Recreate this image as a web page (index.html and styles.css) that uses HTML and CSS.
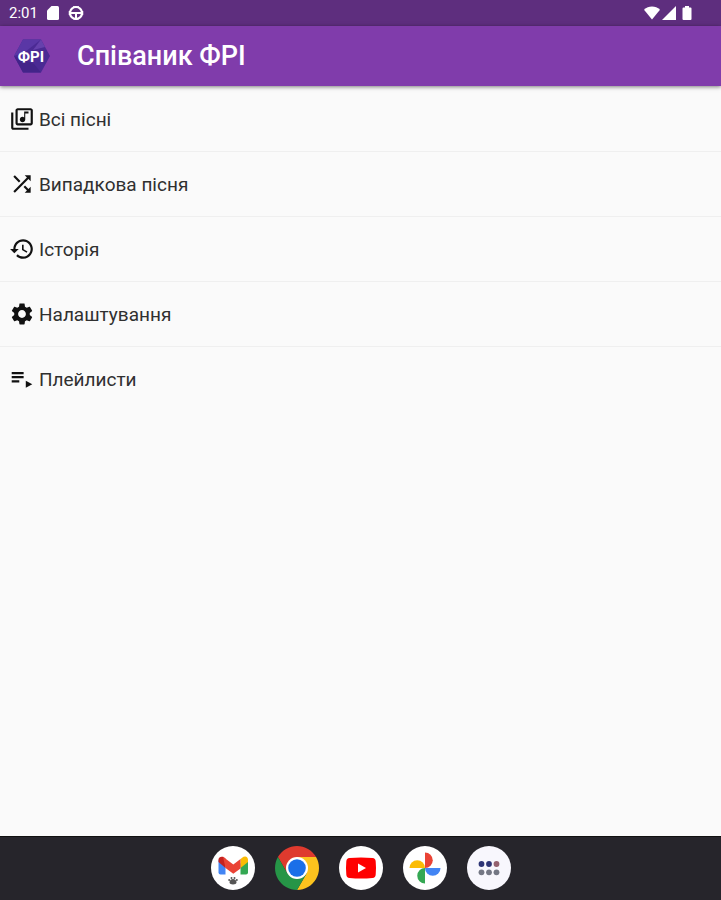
FILE: index.html
```html
<!doctype html>
<html lang="uk">
   <head>
      <meta charset="UTF-8" />
      <meta name="viewport" content="width=device-width, initial-scale=1.0" />
      <title>Співаник ФРІ</title>
      <link rel="stylesheet" href="styles.css">
   </head>
   <body>
      <div class="status">
         <span class="time">2:01</span>
         <svg class="sd" width="12" height="14" viewBox="0 0 12 14"><path fill="#fff" d="M4.500 0H10.500Q12 0 12 1.500V12.500Q12 14 10.500 14H1.500Q0 14 0 12.500V4.500z"/></svg>
         <svg class="wheel" width="16" height="16" viewBox="0 0 16 16" fill="none" stroke="#fff">
            <circle cx="8" cy="8" r="6" stroke-width="2.200"/>
            <path d="M2 8h12M8 9v4" stroke-width="2"/>
            <path d="M5 2h6M1.500 6v4M14.500 6v4M5.500 14h5" stroke-width="1.500"/>
         </svg>
         <div class="signals">
            <svg width="16" height="14" viewBox="0 0 16 14"><path fill="#fff" d="M8 13.500L0 3.800Q3.500 .5 8 .5t8 3.300z"/></svg>
            <svg width="14" height="14" viewBox="0 0 14 14"><path fill="#fff" d="M14 0v14H0z"/></svg>
            <svg class="battery" width="10" height="14" viewBox="0 0 10 14"><path fill="#fff" d="M3 0h4v1.500h1.500q1 0 1 1V13q0 1-1 1h-7q-1 0-1-1V2.500q0-1 1-1H3z"/></svg>
         </div>
      </div>

      <header class="appbar">
         <svg class="logo" width="36" height="36" viewBox="0 0 36 36">
            <path fill="#4b2a94" d="M9 1.500h18L36 18l-9 16.500H9L0 18z"/>
            <path fill="#5a37a6" d="M9 1.500h18L11 14 0 18z"/>
            <path fill="#6641ad" d="M27 1.500L19 12l12-3z"/>
            <path fill="#432489" d="M0 18l20 8 7 8.500H9z"/>
            <text class="logo-text" x="17" y="24" text-anchor="middle">ФРІ</text>
         </svg>
         <h1>Співаник ФРІ</h1>
      </header>

      <main>
         <ul class="menu">
            <li><a href="#songs">
               <svg viewBox="0 0 24 24"><path d="M20 2H8c-1.100 0-2 .9-2 2v12c0 1.100.9 2 2 2h12c1.100 0 2-.9 2-2V4c0-1.100-.9-2-2-2zm0 14H8V4h12v12zm-7.500-1c1.380 0 2.500-1.120 2.500-2.500V7h3V5h-4v5.510c-.42-.32-.93-.51-1.500-.51-1.380 0-2.500 1.120-2.500 2.500s1.120 2.500 2.500 2.500zM4 6H2v14c0 1.100.9 2 2 2h14v-2H4V6z"/></svg>
               Всі пісні
            </a></li>
            <li><a href="#random">
               <svg viewBox="0 0 24 24"><path d="M10.590 9.170L5.410 4 4 5.410l5.170 5.170 1.420-1.410zM14.500 4l2.040 2.040L4 18.590 5.410 20 17.960 7.460 20 9.500V4h-5.500zm.33 9.410l-1.410 1.410 3.130 3.130L14.500 20H20v-5.500l-2.040 2.040-3.130-3.130z"/></svg>
               Випадкова пісня
            </a></li>
            <li><a href="#history">
               <svg viewBox="0 0 24 24"><path d="M13 3c-4.970 0-9 4.030-9 9H1l3.890 3.890.07.14L9 12H6c0-3.870 3.130-7 7-7s7 3.130 7 7-3.130 7-7 7c-1.930 0-3.680-.79-4.940-2.060l-1.420 1.420C8.270 19.990 10.510 21 13 21c4.970 0 9-4.030 9-9s-4.030-9-9-9zm-1 5v5l4.280 2.540.72-1.210-3.500-2.080V8H12z"/></svg>
               Історія
            </a></li>
            <li><a href="#settings">
               <svg viewBox="0 0 24 24"><path d="M19.140 12.940c.04-.3.06-.61.06-.94 0-.32-.02-.64-.07-.94l2.030-1.580c.18-.14.23-.41.12-.61l-1.920-3.320c-.12-.22-.37-.29-.59-.22l-2.390.96c-.5-.38-1.030-.7-1.620-.94l-.36-2.540c-.04-.24-.24-.41-.48-.41h-3.840c-.24 0-.43.17-.47.41l-.36 2.540c-.59.24-1.130.57-1.620.94l-2.390-.96c-.22-.08-.47 0-.59.22L2.740 8.870c-.12.21-.08.47.12.61l2.030 1.580c-.05.3-.09.63-.09.94s.02.64.07.94l-2.030 1.580c-.18.14-.23.41-.12.61l1.920 3.320c.12.22.37.29.59.22l2.390-.96c.5.38 1.030.7 1.620.94l.36 2.540c.05.24.24.41.48.41h3.840c.24 0 .44-.17.47-.41l.36-2.540c.59-.24 1.130-.56 1.620-.94l2.390.96c.22.08.47 0 .59-.22l1.920-3.320c.12-.22.07-.47-.12-.61l-2.010-1.580zM12 15.600c-1.980 0-3.600-1.620-3.600-3.600s1.620-3.600 3.600-3.600 3.600 1.620 3.600 3.600-1.620 3.600-3.600 3.600z"/></svg>
               Налаштування
            </a></li>
            <li><a href="#playlists">
               <svg viewBox="0 0 24 24"><path d="M2.500 5.500h11v2h-11zM2.500 9.300h11v2h-11zM2.500 13.200h7v2h-7zM15.500 13.500v6.500l6-3.200z"/></svg>
               Плейлисти
            </a></li>
         </ul>
      </main>

      <nav class="dock">
         <button type="button" aria-label="Gmail">
            <svg viewBox="0 0 44 44">
               <circle cx="22" cy="22" r="22" fill="#fff"/>
               <path fill="#4285f4" d="M7.500 14v12.500q0 2 2 2h5V17z"/>
               <path fill="#34a853" d="M29.500 28.500h5.500q2 0 2-2V14l-7.500 3.500z"/>
               <path fill="#fbbc04" d="M29.500 13v9l7.500-6v-2.500q-.7-4-4.500-2.700z"/>
               <path fill="#c5221f" d="M7.500 16l7 6v-9.500l-2.500-1.700Q8 10 7.500 13.500z"/>
               <path fill="#ea4335" d="M12 10.800l10.300 7.700L29.500 13v9.500l-7.200 5.300L14.500 22z"/>
               <path fill="#555" d="M22 33c2 0 3.500 1.500 3.500 3.500 0 1.300-1.500 2-3.500 2s-3.500-.7-3.500-2C18.500 34.500 20 33 22 33z"/>
               <g fill="#555"><circle cx="18.200" cy="34" r="1"/><circle cx="20.500" cy="32" r="1"/><circle cx="23.500" cy="32" r="1"/><circle cx="25.800" cy="34" r="1"/></g>
            </svg>
         </button>
         <button type="button" aria-label="Chrome">
            <svg viewBox="2 2 44 44">
               <path fill="#df3a2e" d="M4.950 13A22 22 0 0 1 43.050 13H24L24 24 14.470 29.500z"/>
               <path fill="#fcc31e" d="M43.050 13A22 22 0 0 1 24 46L33.530 29.500 24 24V13z"/>
               <path fill="#269547" d="M24 46A22 22 0 0 1 4.950 13L14.470 29.500 24 24 33.530 29.500z"/>
               <circle cx="24" cy="24" r="11" fill="#fff"/>
               <circle cx="24" cy="24" r="8.800" fill="#1a6fe8"/>
            </svg>
         </button>
         <button type="button" aria-label="YouTube">
            <svg viewBox="0 0 44 44">
               <circle cx="22" cy="22" r="22" fill="#fff"/>
               <path fill="#f00" d="M10.500 12Q22 11 33.500 12 36.500 12.300 36.700 15.500 37.300 22 36.700 28.500 36.500 31.700 33.500 32 22 33 10.500 32 7.500 31.700 7.300 28.500 6.700 22 7.300 15.500 7.500 12.300 10.500 12z"/>
               <path fill="#fff" d="M19 17.500v9l8-4.500z"/>
            </svg>
         </button>
         <button type="button" aria-label="Photos">
            <svg viewBox="0 0 44 44">
               <circle cx="22" cy="22" r="22" fill="#fff"/>
               <path fill="#ea4335" d="M22 6.500a7.750 7.750 0 0 1 0 15.500z"/>
               <path fill="#4285f4" d="M37.500 22a7.750 7.750 0 0 1-15.500 0z"/>
               <path fill="#34a853" d="M22 37.500a7.750 7.750 0 0 1 0-15.500z"/>
               <path fill="#fbbc04" d="M6.500 22a7.750 7.750 0 0 1 15.500 0z"/>
            </svg>
         </button>
         <button type="button" aria-label="All apps">
            <svg viewBox="0 0 44 44">
               <circle cx="22" cy="22" r="22" fill="#f8f7fd"/>
               <g fill="#2d3475"><circle cx="14.500" cy="18" r="2.900"/><circle cx="22" cy="18" r="2.900"/></g>
               <circle cx="29.500" cy="18" r="2.900" fill="#94616f"/>
               <g fill="#747784"><circle cx="14.500" cy="26.300" r="2.900"/><circle cx="22" cy="26.300" r="2.900"/><circle cx="29.500" cy="26.300" r="2.900"/></g>
            </svg>
         </button>
      </nav>
   </body>
</html>
```
FILE: styles.css
```css
* {
   margin: 0;
   padding: 0;
   box-sizing: border-box;
   font-family: Roboto, sans-serif;
}
body {
   display: flex;
   flex-direction: column;
   min-height: 100vh;
   background: #fafafa;
   color: #303030;
}
svg {
   display: block;
   flex-shrink: 0;
}
.status {
   display: flex;
   align-items: center;
   height: 26px;
   padding: 0 29px 0 9px;
   background: #5e2e7e;
   color: #fff;
}
.time {
   font-size: 15px;
   margin-right: 9px;
}
.wheel {
   margin-left: 9px;
}
.signals {
   display: flex;
   gap: 2px;
   margin-left: auto;
}
.battery {
   margin-left: 4px;
}
.appbar {
   display: flex;
   align-items: center;
   gap: 27px;
   height: 60px;
   padding: 0 14px;
   background: #803cab;
   color: #fff;
   box-shadow: 0 1px 4px rgba(0, 0, 0, 0.5);
}
.appbar h1 {
   font-size: 27px;
   font-weight: 500;
}
.logo-text {
   fill: #fff;
   font-size: 15px;
   font-weight: 700;
}
main {
   flex: 1;
   padding-top: 1px;
}
.menu {
   list-style: none;
}
.menu li + li {
   border-top: 1px solid #efefef;
}
.menu a {
   display: flex;
   align-items: center;
   gap: 4px;
   height: 64px;
   padding: 0 9px;
   color: inherit;
   font-size: 19px;
   text-decoration: none;
}
.menu svg {
   width: 26px;
   height: 26px;
   fill: #111;
}
.dock {
   display: flex;
   justify-content: center;
   align-items: center;
   gap: 20px;
   height: 64px;
   padding-bottom: 1px;
   background: #26252b;
   border-top: 1px solid #111;
}
.dock button {
   width: 44px;
   height: 44px;
   border: none;
   border-radius: 50%;
   background: none;
   cursor: pointer;
}
```
